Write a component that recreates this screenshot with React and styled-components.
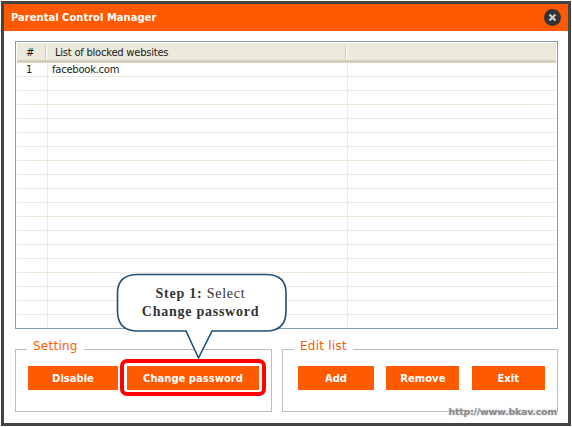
import styled, { createGlobalStyle } from 'styled-components'

const GlobalStyle = createGlobalStyle`
    html, body {
        margin: 0;
        padding: 0;
        background: #fff;
    }
`

const Page = styled.div`
    width: 572px;
    height: 427px;
    padding: 1px;
    box-sizing: border-box;
    position: relative;
    overflow: hidden;
`

const Frame = styled.div`
    width: 570px;
    height: 425px;
    box-sizing: border-box;
    border: 3px solid #444;
    background: #fff;
    display: flex;
    flex-direction: column;
`

const TitleBar = styled.div`
    height: 27px;
    flex: none;
    background: #ff5a00;
    display: flex;
    align-items: center;
    justify-content: space-between;
    padding: 0 7px 0 7px;
`

const Title = styled.div`
    font-family: "DejaVu Sans", sans-serif;
    font-size: 10px;
    font-weight: 700;
    color: #fff;
`

const CloseButton = styled.div`
    width: 17px;
    height: 17px;
    border-radius: 50%;
    background: #333;
    display: flex;
    align-items: center;
    justify-content: center;
    margin-top: -1px;
`

const Content = styled.div`
    flex: 1;
    padding: 10px 10px 0 11px;
    display: flex;
    flex-direction: column;
`

const ListBox = styled.div`
    height: 288px;
    box-sizing: border-box;
    border: 1px solid #7f9db9;
    padding: 1px;
    overflow: hidden;
`

const Grid = styled.table`
    width: 100%;
    border-collapse: separate;
    border-spacing: 0;
    table-layout: fixed;
    font-family: "DejaVu Sans", sans-serif;
    font-size: 10px;
    letter-spacing: -0.25px;
    color: #222;
`

const HeadCell = styled.th`
    height: 20px;
    padding: 2px 0 0 ${({ $pad }) => $pad || 0}px;
    box-sizing: border-box;
    background: #ebeadb;
    border-bottom: 3px solid #d0cfbc;
    font-weight: 400;
    text-align: left;
    position: relative;
    &:not(:last-child)::after {
        content: '';
        position: absolute;
        right: 2px;
        top: 3px;
        height: 13px;
        width: 1px;
        background: #c8c7b6;
        box-shadow: 1px 0 0 #fff;
    }
`

const Cell = styled.td`
    height: 14px;
    padding: 1px 0 0 ${({ $pad }) => $pad || 0}px;
    box-sizing: border-box;
    border-bottom: 1px solid #ebeadb;
    border-right: 1px solid #ebeadb;
    text-align: left;
    line-height: 12px;
    white-space: nowrap;
    &:last-child {
        border-right: 0;
    }
`

const Panels = styled.div`
    display: flex;
    gap: 10px;
    margin-top: 10px;
`

const Panel = styled.fieldset`
    width: ${({ $width }) => $width}px;
    height: 73px;
    margin: 0;
    padding: 0 0 0 ${({ $pad }) => $pad}px;
    box-sizing: border-box;
    border: 1px solid #bcbcbc;
    display: block;
`

const PanelTitle = styled.legend`
    margin-left: ${({ $offset }) => $offset}px;
    padding: 0 6px 6px;
    font-family: "DejaVu Sans", sans-serif;
    font-size: 12px;
    line-height: 14px;
    letter-spacing: 0.25px;
    color: #ff5a00;
`

const ButtonRow = styled.div`
    display: flex;
    gap: ${({ $gap }) => $gap}px;
    margin-top: 7px;
`

const Action = styled.button`
    width: ${({ $width }) => $width}px;
    height: 24px;
    padding: 0;
    border: 0;
    background: #ff5a00;
    color: #fff;
    font-family: "DejaVu Sans", sans-serif;
    font-size: 10px;
    font-weight: 700;
`

const Highlight = styled.div`
    position: absolute;
    left: 120px;
    top: 359px;
    width: 146px;
    height: 37px;
    box-sizing: border-box;
    border: 4px solid #f00;
    border-radius: 7px;
`

const Callout = styled.div`
    position: absolute;
    left: 116px;
    top: 273px;
    width: 172px;
    height: 87px;
`

const CalloutShape = styled.svg`
    position: absolute;
    inset: 0;
`

const CalloutText = styled.div`
    position: absolute;
    left: 0;
    right: 3px;
    top: 12px;
    text-align: center;
    font-family: "Liberation Serif", serif;
    font-size: 14px;
    line-height: 18px;
    letter-spacing: 0.75px;
    color: #333;
    b {
        font-weight: 700;
    }
`

const Watermark = styled.div`
    position: absolute;
    right: 15px;
    top: 405px;
    font-family: "DejaVu Sans", sans-serif;
    font-size: 9.5px;
    font-weight: 700;
    line-height: 13px;
    letter-spacing: -0.25px;
    color: #8c8c8c;
    background: rgba(255, 255, 255, 0.6);
    text-shadow: 0 0 2px #bbb;
`

const rows = Array.from({ length: 19 }, (_, i) => i)

const App = () => {
    return (
        <Page>
            <GlobalStyle />
            <Frame>
                <TitleBar>
                    <Title>Parental Control Manager</Title>
                    <CloseButton>
                        <svg width="9" height="9" viewBox="0 0 9 9">
                            <path d="M1.5 1.5l6 6M7.5 1.5l-6 6" stroke="#ccc" strokeWidth="2.2" />
                        </svg>
                    </CloseButton>
                </TitleBar>
                <Content>
                    <ListBox>
                        <Grid>
                            <colgroup>
                                <col width="31" />
                                <col width="300" />
                                <col />
                            </colgroup>
                            <thead>
                                <tr>
                                    <HeadCell $pad={9}>#</HeadCell>
                                    <HeadCell $pad={7}>List of blocked websites</HeadCell>
                                    <HeadCell />
                                </tr>
                            </thead>
                            <tbody>
                                {rows.map((i) => (
                                    <tr key={i}>
                                        <Cell $pad={9}>{i === 0 ? '1' : ''}</Cell>
                                        <Cell $pad={4}>{i === 0 ? 'facebook.com' : ''}</Cell>
                                        <Cell />
                                    </tr>
                                ))}
                            </tbody>
                        </Grid>
                    </ListBox>
                    <Panels>
                        <Panel $width={257} $pad={12}>
                            <PanelTitle $offset={-1}>Setting</PanelTitle>
                            <ButtonRow $gap={9}>
                                <Action $width={90}>Disable</Action>
                                <Action $width={132}>Change password</Action>
                            </ButtonRow>
                        </Panel>
                        <Panel $width={276} $pad={15}>
                            <PanelTitle $offset={-4}>Edit list</PanelTitle>
                            <ButtonRow $gap={12.4}>
                                <Action $width={76}>Add</Action>
                                <Action $width={73}>Remove</Action>
                                <Action $width={73}>Exit</Action>
                            </ButtonRow>
                        </Panel>
                    </Panels>
                </Content>
            </Frame>
            <Highlight />
            <Callout>
                <CalloutShape width="172" height="87" viewBox="0 0 172 87">
                    <path
                        d="M22 1.500H150Q170 1.500 170 20V38Q170 58 150 58H96L82.500 85L70 58H22Q1.500 58 1.500 38V20Q1.500 1.500 22 1.500Z"
                        fill="#fff"
                        stroke="#1f4e79"
                        strokeWidth="1.6"
                    />
                </CalloutShape>
                <CalloutText>
                    <b>Step 1:</b> Select
                    <br />
                    <b>Change password</b>
                </CalloutText>
            </Callout>
            <Watermark>http://www.bkav.com</Watermark>
        </Page>
    )
}

export default App
